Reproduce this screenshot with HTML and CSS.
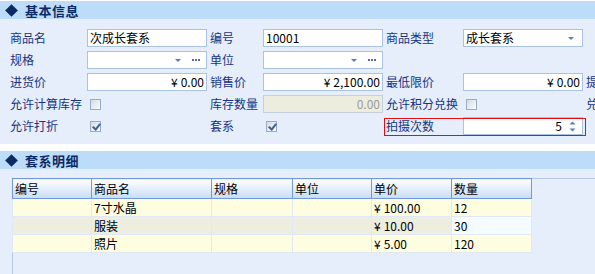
FILE: index.html
```html
<!DOCTYPE html>
<html lang="zh">
<head>
  <meta charset="UTF-8">
  <title>套系信息</title>
  <link rel="stylesheet" href="styles.css">
</head>
<body>
  <div class="panel info-panel">
    <div class="panel-title"><span class="diamond"></span>基本信息</div>
    <div class="form">
      <label>商品名</label>
      <div class="field">次成长套系</div>
      <label>编号</label>
      <div class="field">10001</div>
      <label>商品类型</label>
      <div class="field combo">成长套系<span class="arrow"></span></div>
      <label></label>

      <label>规格</label>
      <div class="field combo has-dots"><span class="arrow"></span><span class="dots"><i></i><i></i><i></i></span></div>
      <label>单位</label>
      <div class="field combo has-dots"><span class="arrow"></span><span class="dots"><i></i><i></i><i></i></span></div>
      <label></label>
      <label></label>
      <label></label>

      <label>进货价</label>
      <div class="field num"><span class="yen">¥</span>0.00</div>
      <label>销售价</label>
      <div class="field num"><span class="yen">¥</span>2,100.00</div>
      <label>最低限价</label>
      <div class="field num"><span class="yen">¥</span>0.00</div>
      <label class="clipped">提成</label>

      <label>允许计算库存</label>
      <div class="check-cell"><span class="checkbox"></span></div>
      <label>库存数量</label>
      <div class="field num disabled">0.00</div>
      <label>允许积分兑换</label>
      <div class="check-cell"><span class="checkbox"></span></div>
      <label class="clipped">兑换</label>

      <label>允许打折</label>
      <div class="check-cell"><span class="checkbox checked"></span></div>
      <label>套系</label>
      <div class="check-cell"><span class="checkbox checked"></span></div>
      <div class="highlight">
        <label>拍摄次数</label>
        <div class="field num spin">5<svg class="spinner" width="7" height="11" viewBox="0 0 7 11"><path d="M0.5 3.5 L3.5 0.5 L6.5 3.5 Z" fill="#5a7cb8"/><path d="M0.5 7.5 L3.5 10.5 L6.5 7.5 Z" fill="#5a7cb8"/></svg></div>
      </div>
      <label></label>
    </div>
  </div>

  <div class="panel detail-panel">
    <div class="panel-title"><span class="diamond"></span>套系明细</div>
    <div class="detail-body">
      <div class="grid-wrap">
        <table class="grid">
          <colgroup>
            <col style="width:79px"><col style="width:120px"><col style="width:81px">
            <col style="width:79px"><col style="width:80px"><col style="width:80px">
          </colgroup>
          <thead>
            <tr><th>编号</th><th>商品名</th><th>规格</th><th>单位</th><th>单价</th><th>数量</th></tr>
          </thead>
          <tbody>
            <tr><td></td><td>7寸水晶</td><td></td><td></td><td><span class="yen">¥</span>100.00</td><td>12</td></tr>
            <tr class="alt"><td></td><td>服装</td><td></td><td></td><td><span class="yen">¥</span>10.00</td><td class="current">30</td></tr>
            <tr><td></td><td>照片</td><td></td><td></td><td><span class="yen">¥</span>5.00</td><td>120</td></tr>
          </tbody>
        </table>
      </div>
    </div>
  </div>
</body>
</html>
```

FILE: styles.css
```css
html, body {
  margin: 0;
  overflow: hidden;
}

body {
  width: 595px;
  height: 274px;
  background: #ffffff;
  font-family: "Noto Sans CJK SC", "Noto Sans", sans-serif;
  font-size: 12px;
  color: #000;
}

.panel {
  background: #e6edfb;
}

.info-panel {
  margin-top: 1px;
}

.detail-panel {
  margin-top: 7px;
  height: 124px;
  display: flex;
  flex-direction: column;
}

.panel-title {
  height: 18px;
  display: flex;
  align-items: center;
  padding-left: 7px;
  background: #bcdcf9;
  color: #0c2a64;
  font-size: 13px;
  font-weight: bold;
  letter-spacing: 0.5px;
}

.diamond {
  width: 9px;
  height: 9px;
  margin-right: 9px;
  background: #0c2a64;
  transform: rotate(45deg);
}

/* form grid */
.form {
  display: grid;
  grid-template-columns: 80px 120px 56px 120px 80px 120px minmax(0, 1fr);
  grid-auto-rows: 18px;
  row-gap: 4px;
  padding: 10px 0 9px 7px;
}

.form label {
  padding-left: 3px;
  line-height: 18px;
  color: #17357f;
  white-space: nowrap;
}

/* labels that run past the right edge of the window */
.form label.clipped {
  overflow: hidden;
}

.yen {
  margin-right: 3px;
}

.field {
  position: relative;
  box-sizing: border-box;
  height: 18px;
  padding: 0 2px;
  border: 1px solid #a8c3e6;
  background: #fff;
  line-height: 16px;
  white-space: nowrap;
}

.field.num {
  text-align: right;
}

.field.disabled {
  background: #ecedde;
  border-color: #c4d0de;
  color: #9c9c9c;
}

.field.spin {
  padding-right: 20px;
}

.arrow {
  position: absolute;
  right: 8px;
  top: 7px;
  width: 0;
  height: 0;
  border-left: 3px solid transparent;
  border-right: 3px solid transparent;
  border-top: 3px solid #5a7cb8;
}

.has-dots .arrow {
  right: 25px;
}

.dots {
  position: absolute;
  right: 6px;
  top: 7px;
  display: flex;
  gap: 1px;
}

.dots i {
  width: 2px;
  height: 2px;
  background: #4a6db4;
}

.spinner {
  position: absolute;
  right: 6px;
  top: 3px;
}

.check-cell {
  display: flex;
  align-items: center;
  padding-left: 3px;
}

.checkbox {
  width: 11px;
  height: 11px;
  box-sizing: border-box;
  border: 1px solid #97acc8;
  background: linear-gradient(135deg, #d6dbe2, #fbfbfc);
  position: relative;
}

.checkbox.checked::after {
  content: "";
  position: absolute;
  left: 3px;
  top: 0px;
  width: 3px;
  height: 6px;
  border-right: 2px solid #3d5f9f;
  border-bottom: 2px solid #3d5f9f;
  transform: rotate(40deg);
}

.highlight {
  grid-column: 5 / 7;
  display: grid;
  grid-template-columns: 80px 120px;
  position: relative;
}

.highlight::after {
  content: "";
  position: absolute;
  left: 1px;
  right: -3px;
  top: 1px;
  bottom: -1px;
  border: 1px solid #e01010;
  pointer-events: none;
}

/* detail grid */
.detail-body {
  flex: 1;
  padding: 9px 0 0 12px;
  display: flex;
}

.grid-wrap {
  flex: 1;
  border-top: 1px solid #b3c8e8;
  border-left: 1px solid #b3c8e8;
}

.grid {
  position: relative;
  margin: -1px 0 0 -1px;
  border-collapse: collapse;
  table-layout: fixed;
  width: 520px;
}

.grid th {
  height: 19px;
  padding: 0 2px;
  border: 1px solid #709ad1;
  background: linear-gradient(#ffffff, #c8dcf5);
  font-weight: normal;
  text-align: left;
  line-height: 17px;
}

.grid td {
  height: 17px;
  padding: 0 2px;
  border: 1px solid #e0e8f6;
  border-top: none;
  background: #fffde0;
  line-height: 17px;
}

.grid tr.alt td {
  background: #eeeee0;
}

.grid tr.alt td.current {
  background: #f4fcff;
}
```
